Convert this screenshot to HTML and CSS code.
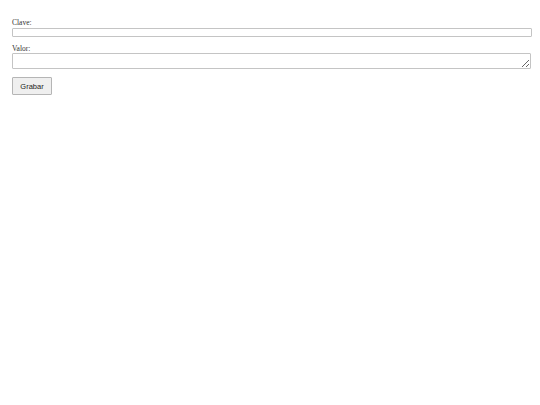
FILE: index.html
```html
<!DOCTYPE html>
<html>
<head>
<meta charset="utf-8">
<link rel="stylesheet" href="styles.css">
</head>
<body>
<form class="form">
  <label class="label" for="clave">Clave:</label>
  <input class="input" id="clave" type="text">
  <label class="label label-second" for="valor">Valor:</label>
  <textarea class="area" id="valor"></textarea>
  <button class="btn" type="button">Grabar</button>
</form>
</body>
</html>
```
FILE: styles.css
```css
html, body {
  margin: 0;
  padding: 0;
  background: #ffffff;
}
body {
  padding: 18px 9px 0 12px;
  font-family: "Liberation Serif", "Times New Roman", serif;
  font-size: 7.5px;
  color: #333;
}
.form {
  display: flex;
  flex-direction: column;
  align-items: flex-start;
}
.label {
  display: block;
  line-height: 9px;
  margin-bottom: 1px;
}
.label-second {
  margin-top: 7px;
  margin-bottom: 0;
}
.input {
  box-sizing: border-box;
  width: 520px;
  height: 9px;
  margin: 0;
  padding: 0;
  border: 1px solid #c4c4c4;
  border-radius: 1px;
  background: #fff;
}
.area {
  box-sizing: border-box;
  width: 519px;
  height: 16px;
  margin: 0;
  padding: 0;
  border: 1px solid #c4c4c4;
  border-radius: 1px;
  background: #fff;
  resize: both;
}
.btn {
  box-sizing: border-box;
  margin-top: 8px;
  width: 40px;
  height: 18px;
  padding: 0;
  font-family: "Liberation Sans", Arial, sans-serif;
  font-size: 7.5px;
  color: #222;
  background: #efefef;
  border: 1px solid #b5b5b5;
  border-radius: 1px;
}
```
